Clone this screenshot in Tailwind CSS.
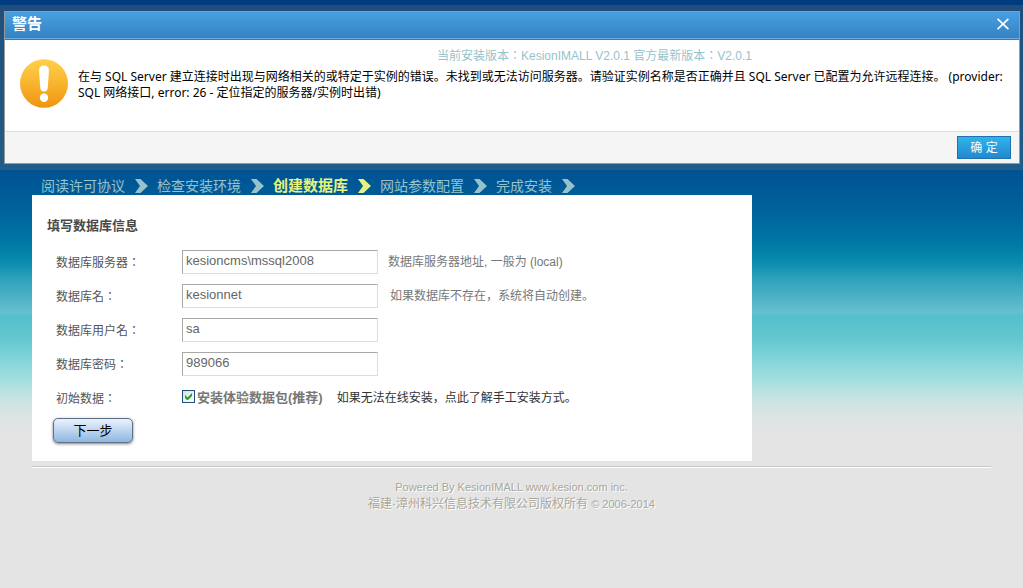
<!DOCTYPE html>
<html lang="zh-CN">
<head>
<meta charset="utf-8">
<title>KesionIMALL 安装向导</title>
<script src="https://cdn.jsdelivr.net/npm/@tailwindcss/browser@4"></script>
</head>
<body class="relative min-h-screen bg-[#e4e4e4] bg-[linear-gradient(to_bottom,#003b80_0px,#004488_40px,#005293_170px,#005c98_195px,#006b9f_225px,#007ba6_245px,#0a8aae_261px,#2fa3bb_280px,#52b4c7_300px,#66bfcf_312px,#52c0cd_317px,#66c8d0_340px,#85d6d9_362px,#a3dfdf_380px,#cae3e2_400px,#dde4e4_418px,#e4e4e4_435px)] font-['Liberation_Sans','Noto_Sans_CJK_SC',sans-serif] text-[12px] text-[#555]">

  <!-- Alert dialog -->
  <section role="alertdialog" aria-labelledby="dlg-title" aria-describedby="dlg-text" class="absolute inset-x-0 top-[5px] bg-[#80806a]/25 py-1.5 pr-[3px] pl-1">
    <div class="flex flex-col border border-[#999] bg-white">
      <header class="flex h-7 items-center justify-between border-b border-[#2f7cc0] bg-linear-to-b from-[#489fe0] to-[#3382c2] pr-2 pb-[3px] pl-[7px] shadow-[inset_0_-1px_0_#6aaae4]">
        <h2 id="dlg-title" class="text-[15px] leading-5 font-bold text-white">警告</h2>
        <button type="button" aria-label="关闭" class="flex size-4 items-center justify-center">
          <svg class="size-3" viewBox="0 0 12 12" fill="none" stroke="#fff" stroke-width="1.7"><path d="M0.6 0.8 11.4 11.2M11.4 0.8 0.6 11.2"/></svg>
        </button>
      </header>
      <div class="flex h-[91px] items-start gap-[10px] pt-[19px] pr-3 pl-[15px]">
        <svg class="h-[49px] w-12 shrink-0" viewBox="0 0 48 49">
          <defs><linearGradient id="orb" x1="0" y1="0" x2="0" y2="1"><stop offset="0" stop-color="#ffd04c"/><stop offset=".5" stop-color="#f8b42e"/><stop offset="1" stop-color="#f09410"/></linearGradient></defs>
          <ellipse cx="24" cy="24.500" rx="24" ry="24.300" fill="url(#orb)"/>
          <path d="M24 6.500c3.300 0 5 2 4.900 5.200L27.800 28.500c-.2 2.500-1.500 4-3.800 4s-3.600-1.500-3.800-4L19.100 11.700C19 8.500 20.700 6.500 24 6.500Z" fill="#fff"/>
          <circle cx="24" cy="38.800" r="4.200" fill="#fff"/>
        </svg>
        <p id="dlg-text" class="pt-[10px] font-['Noto_Sans','Noto_Sans_CJK_SC',sans-serif] leading-4 text-black">在与 SQL Server 建立连接时出现与网络相关的或特定于实例的错误。未找到或无法访问服务器。请验证实例名称是否正确并且 SQL Server 已配置为允许远程连接。 (provider: SQL 网络接口, error: 26 - 定位指定的服务器/实例时出错)</p>
      </div>
      <footer class="flex h-8 items-center justify-end border-t border-[#ddd] bg-[#f5f5f5] pr-2">
        <button type="button" class="h-[23px] w-[54px] border border-[#1f72b0] bg-linear-to-b from-[#30b4ea] to-[#2488cf] text-[12px] leading-5 text-white">确 定</button>
      </footer>
    </div>
  </section>

  <div class="mx-8 pt-12">
    <!-- The version line stays above the dialog -->
    <p lang="zh-TW" class="relative z-10 w-[720px] text-right font-['Liberation_Sans','Noto_Sans_CJK_TC',sans-serif] leading-4 text-[#96c3cb]">当前安装版本：KesionIMALL V2.0.1 官方最新版本：V2.0.1</p>

    <ol class="mt-[113px] flex h-[18px] items-center gap-[9px] pl-[9px] text-[14px] leading-[18px] whitespace-nowrap text-[#96c3cb]">
      <li class="flex items-center gap-[10px]">阅读许可协议<svg class="h-3.5 w-[13px]" viewBox="0 0 13 14" fill="currentColor"><path d="M0 0h5.500L13 7l-7.500 7H0l5-7z"/></svg></li>
      <li class="flex items-center gap-[10px]">检查安装环境<svg class="h-3.5 w-[13px]" viewBox="0 0 13 14" fill="currentColor"><path d="M0 0h5.500L13 7l-7.500 7H0l5-7z"/></svg></li>
      <li aria-current="step" class="flex items-center gap-[10px] text-[15px] font-bold text-[#e4f47e]">创建数据库<svg class="h-3.5 w-[13px]" viewBox="0 0 13 14" fill="currentColor"><path d="M0 0h5.500L13 7l-7.500 7H0l5-7z"/></svg></li>
      <li class="flex items-center gap-[10px]">网站参数配置<svg class="h-3.5 w-[13px]" viewBox="0 0 13 14" fill="currentColor"><path d="M0 0h5.500L13 7l-7.500 7H0l5-7z"/></svg></li>
      <li class="flex items-center gap-[10px]">完成安装<svg class="h-3.5 w-[13px]" viewBox="0 0 13 14" fill="currentColor"><path d="M0 0h5.500L13 7l-7.500 7H0l5-7z"/></svg></li>
    </ol>

    <form class="w-[720px] bg-white px-[15px] pt-[21px] pb-[18px]">
      <h1 class="text-[13px] leading-5 font-bold text-[#4a4a4a]">填写数据库信息</h1>
      <div class="grid auto-rows-[34px] grid-cols-[126px_1fr] items-center pt-[9px] pl-[9px]">
        <label lang="zh-TW" for="server" class="font-['Noto_Sans_CJK_TC',sans-serif]">数据库服务器：</label>
        <div class="flex items-center gap-[10px]">
          <input id="server" type="text" value="kesioncms\mssql2008" class="h-6 w-[196px] border border-t-[#a9a9a9] border-r-[#ddd] border-b-[#ddd] border-l-[#a9a9a9] bg-white px-[3px] pb-1 text-[13px] text-[#666]">
          <span class="text-[#777]">数据库服务器地址, 一般为 (local)</span>
        </div>
        <label lang="zh-TW" for="dbname" class="font-['Noto_Sans_CJK_TC',sans-serif]">数据库名：</label>
        <div class="flex items-center gap-3">
          <input id="dbname" type="text" value="kesionnet" class="h-6 w-[196px] border border-t-[#a9a9a9] border-r-[#ddd] border-b-[#ddd] border-l-[#a9a9a9] bg-white px-[3px] pb-1 text-[13px] text-[#666]">
          <span class="text-[#777]">如果数据库不存在，系统将自动创建。</span>
        </div>
        <label lang="zh-TW" for="user" class="font-['Noto_Sans_CJK_TC',sans-serif]">数据库用户名：</label>
        <div class="flex items-center">
          <input id="user" type="text" value="sa" class="h-6 w-[196px] border border-t-[#a9a9a9] border-r-[#ddd] border-b-[#ddd] border-l-[#a9a9a9] bg-white px-[3px] pb-1 text-[13px] text-[#666]">
        </div>
        <label lang="zh-TW" for="pass" class="font-['Noto_Sans_CJK_TC',sans-serif]">数据库密码：</label>
        <div class="flex items-center">
          <input id="pass" type="text" value="989066" class="h-6 w-[196px] border border-t-[#a9a9a9] border-r-[#ddd] border-b-[#ddd] border-l-[#a9a9a9] bg-white px-[3px] pb-1 text-[13px] text-[#666]">
        </div>
        <span lang="zh-TW" class="font-['Noto_Sans_CJK_TC',sans-serif]">初始数据：</span>
        <div class="flex items-center gap-[14px]">
          <label for="demo" class="flex items-center gap-0.5 text-[13px] font-bold text-[#777]">
            <span class="mb-1 grid size-[13px] place-items-center">
              <input id="demo" type="checkbox" checked class="peer col-start-1 row-start-1 size-[13px] appearance-none border border-[#1c5180] bg-linear-to-br from-[#dcdcd7] to-white">
              <svg class="pointer-events-none col-start-1 row-start-1 hidden size-[7px] peer-checked:block" viewBox="0 0 7 7" fill="#21a121"><path d="M0 2v3l2 2h1l4-4V0L2.500 4.500z"/></svg>
            </span>
            安装体验数据包(推荐)
          </label>
          <a href="#" class="text-[#333]">如果无法在线安装，点此了解手工安装方式。</a>
        </div>
      </div>
      <button type="submit" class="mt-[3px] ml-1.5 block h-[25px] w-20 rounded-[5px] border border-[#5c7086] bg-linear-to-b from-[#eaf3fd] to-[#8fb6e0] text-[13px] leading-5 text-black shadow-[0_1px_3px_#00000080]">下一步</button>
    </form>

    <hr class="mt-[5px] h-0.5 border-t border-b border-t-[#c8c8c8] border-b-white">
    <footer class="pt-[11px] text-center text-[11px] leading-[17px] text-[#aaa698] [text-shadow:1px_1px_0_#fff]">
      <p>Powered By KesionIMALL <a href="#">www.kesion.com</a> inc.</p>
      <p><span class="text-[12px]">福建·漳州科兴信息技术有限公司版权所有</span> © 2006-2014</p>
    </footer>
  </div>
</body>
</html>
